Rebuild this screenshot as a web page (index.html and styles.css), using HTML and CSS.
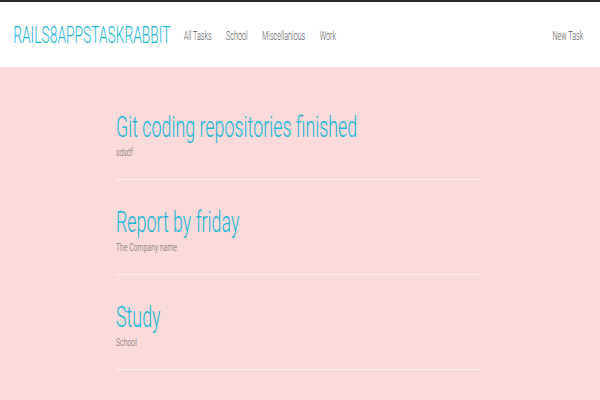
FILE: index.html
```html
<!DOCTYPE html>
<html>
<head>
<meta charset="utf-8">
<link rel="stylesheet" href="styles.css">
</head>
<body>
<header class="topbar">
  <div class="topbar-inner">
    <a class="brand" href="#">RAILS8APPSTASKRABBIT</a>
    <nav class="nav">
      <a href="#">All Tasks</a>
      <a href="#">School</a>
      <a href="#">Miscellanious</a>
      <a href="#">Work</a>
    </nav>
    <a class="new-task" href="#">New Task</a>
  </div>
</header>
<main class="tasks">
  <article class="task">
    <h2 class="task-title">Git coding repositories finished</h2>
    <p class="task-desc">sdsdf</p>
  </article>
  <article class="task">
    <h2 class="task-title">Report by friday</h2>
    <p class="task-desc">The Company name</p>
  </article>
  <article class="task">
    <h2 class="task-title">Study</h2>
    <p class="task-desc">School</p>
  </article>
</main>
</body>
</html>
```
FILE: styles.css
```css
html, body {
  margin: 0;
  padding: 0;
}
body {
  font-family: Roboto, "Liberation Sans", sans-serif;
  font-weight: 300;
  background: #fbdadb;
  min-height: 400px;
}
a {
  text-decoration: none;
}
.topbar {
  background: #fff;
  border-top: 2px solid #2b2b2b;
  height: 65px;
  overflow: hidden;
}
.topbar-inner {
  width: 1000px;
  height: 65px;
  display: flex;
  align-items: center;
  padding: 0 28px 0 22px;
  box-sizing: border-box;
  transform: scaleX(0.6);
  transform-origin: left top;
}
.brand {
  font-size: 23px;
  color: #1ab6d6;
  margin-top: 2px;
}
.nav {
  display: flex;
  gap: 24px;
  margin-left: 22px;
  margin-top: 2px;
}
.nav a, .new-task {
  font-size: 12px;
  color: #555;
}
.new-task {
  margin-left: auto;
  margin-top: 2px;
}
.tasks {
  width: 366px;
  margin: 0 0 0 116px;
  padding-top: 18px;
}
.task {
  padding: 24px 0 20px;
  border-bottom: 1px solid rgba(255, 255, 255, 0.55);
}
.task-title {
  margin: 0;
  font-size: 30px;
  line-height: 36px;
  font-weight: 300;
  color: #1ab6d6;
  white-space: nowrap;
  transform: scaleX(0.595);
  transform-origin: left;
}
.task-desc {
  margin: 0;
  font-size: 11.5px;
  line-height: 14px;
  color: #666;
  white-space: nowrap;
  transform: scaleX(0.6);
  transform-origin: left;
}
```
